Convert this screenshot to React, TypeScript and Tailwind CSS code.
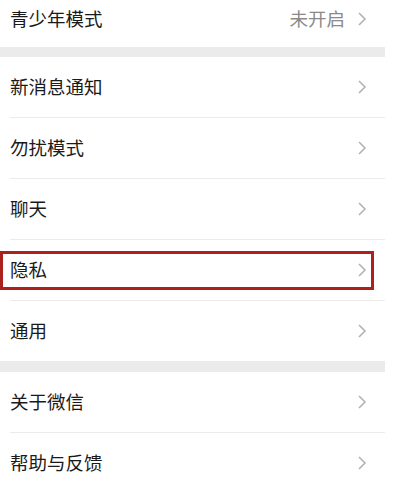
import React from 'react'

const font = { fontFamily: '"Noto Sans CJK SC", "Noto Sans", sans-serif' }

function Chevron() {
  return (
    <svg width="10" height="16" viewBox="0 0 10 16" className="shrink-0">
      <path d="M2 2 L8 8 L2 14" fill="none" stroke="#b3b3b3" strokeWidth="1.6" strokeLinejoin="miter" />
    </svg>
  )
}

function Row({ label, value, highlight, last }: { label: string; value?: string; highlight?: boolean; last?: boolean }) {
  return (
    <div className="relative">
      <div className="flex h-[60px] items-center pl-[10px] pr-[18px]">
        <span className="flex-1 text-[18.5px] text-[#1a1a1a]">{label}</span>
        {value && <span className="mr-[12px] text-[18.5px] text-[#8a8a8a]">{value}</span>}
        <Chevron />
      </div>
      {!last && <div className="ml-[10px] h-px bg-[#ebebeb]" />}
      {highlight && (
        <div className="absolute left-0 right-[11px] top-[11px] h-[39px] border-[3px] border-[#ab221c]" />
      )}
    </div>
  )
}

export default function App() {
  return (
    <div className="h-[493px] w-[393px] overflow-hidden bg-white" style={font}>
      <div className="w-[385px]">
        <div className="flex h-[47px] items-center pb-[10px] pl-[10px] pr-[18px]">
          <span className="flex-1 text-[18.5px] text-[#1a1a1a]">青少年模式</span>
          <span className="mr-[12px] text-[18.5px] text-[#8a8a8a]">未开启</span>
          <Chevron />
        </div>
        <div className="h-[10px] bg-[#ebebeb]" />
        <Row label="新消息通知" />
        <Row label="勿扰模式" />
        <Row label="聊天" />
        <Row label="隐私" highlight />
        <Row label="通用" last />
        <div className="h-[11px] bg-[#ebebeb]" />
        <Row label="关于微信" />
        <Row label="帮助与反馈" last />
      </div>
    </div>
  )
}
